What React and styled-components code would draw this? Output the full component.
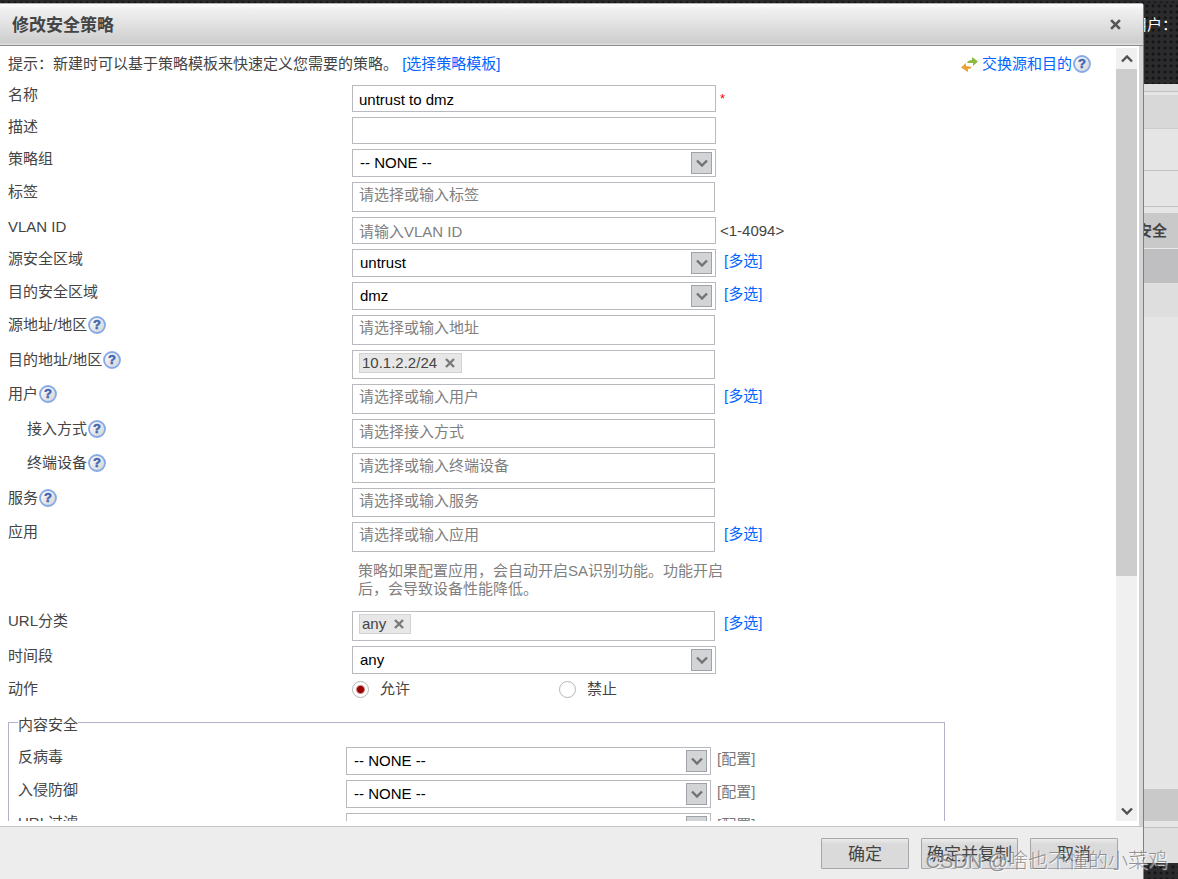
/* 3rd party modules */
import React from 'react';
import styled, { createGlobalStyle } from 'styled-components';

const GlobalStyle = createGlobalStyle`
  * {
    box-sizing: border-box;
  }

  body {
    margin: 0;
    color: #444;
    font-family: 'Liberation Sans', 'Noto Sans CJK SC', sans-serif;
    font-size: 15px;
    line-height: 20px;
  }

  button,
  input,
  select {
    margin: 0;
    font: inherit;
  }
`;

const Page = styled('div')`
  position: relative;
  display: flex;
  height: 100vh;
  padding-top: 3px;
  overflow: hidden;
  background: #2b2b2d radial-gradient(circle, #151516 1px, transparent 2px) 0 0 / 6px 6px;
`;

const Dialog = styled('section')`
  display: flex;
  flex: 1;
  flex-direction: column;
  min-width: 0;
  border-top: 1px solid #b4b4b4;
  border-right: 1px solid #808080;
  border-top-right-radius: 3px;
  background: #ededed;
`;

const Header = styled('header')`
  display: flex;
  align-items: center;
  justify-content: space-between;
  height: 42px;
  flex-shrink: 0;
  padding: 2px 22px 0 12px;
  border-bottom: 1px solid #8c8c8c;
  background: linear-gradient(#fff, #f0f0f0 15%, #cecece 94%, #e2e2e2);
`;

const Title = styled('h1')`
  margin: 0;
  font-size: 17px;
  line-height: 24px;
`;

const CloseButton = styled('button')`
  display: flex;
  align-items: center;
  justify-content: center;
  width: 11px;
  height: 22px;
  padding: 0 0 2px;
  border: 0;
  background: none;
  color: #555;
`;

const Body = styled('div')`
  display: flex;
  flex: 1;
  min-height: 0;
  padding: 2px 2px 5px 0;
  border-right: 4px solid #d4d4d4;
  background: #fff;
`;

const Pane = styled('div')`
  flex: 1;
  min-width: 0;
  padding: 6px 25px 0 8px;
  overflow: auto;
  scrollbar-width: none;
`;

const Scrollbar = styled('div')`
  display: flex;
  flex-direction: column;
  flex-shrink: 0;
  width: 21px;
  background: #f0f0f0;
`;

const ScrollButton = styled('button')`
  display: flex;
  align-items: center;
  justify-content: center;
  height: 21px;
  padding: 0;
  border: 0;
  background: #f0f0f0;
  color: #505050;
`;

const ScrollTrack = styled('div')`
  flex: 1;
`;

const ScrollThumb = styled('div')`
  height: 69.4%;
  background: #cdcdcd;
`;

const Hint = styled('div')`
  display: flex;
  justify-content: space-between;
  margin-bottom: 11px;
`;

const HintText = styled('p')`
  margin: 0;
`;

const Link = styled('a')`
  color: ${props => (props.$muted ? '#777' : '#06f')};
  text-decoration: none;
`;

const Help = styled('svg')`
  flex-shrink: 0;
  margin-left: 1px;
`;

const Swap = styled('div')`
  display: flex;
  align-items: center;

  ${Link} {
    margin-left: 4px;
  }
`;

const Row = styled('div')`
  display: flex;
  align-items: flex-start;
  margin-bottom: 5px;
`;

const Label = styled('label')`
  display: flex;
  flex-shrink: 0;
  align-items: center;
  width: ${props => (props.$inner ? 328 : 344)}px;
  height: 20px;
  padding-left: ${props => (props.$indent ? 19 : 0)}px;
`;

const TextInput = styled('input')`
  width: 364px;
  height: 27px;
  padding: 1px 6px 0;
  border: 1px solid #b9b9c0;
  background: #fff;
  color: #000;

  &::placeholder {
    color: #808080;
    opacity: 1;
  }
`;

const SelectBox = styled('div')`
  position: relative;
  width: ${props => (props.$inner ? 365 : 364)}px;
  height: 28px;
`;

const Select = styled('select')`
  width: 100%;
  height: 28px;
  padding: 0 28px 0 7px;
  border: 1px solid #b9b9c0;
  border-radius: 0;
  appearance: none;
  background: #fff;
  color: #000;
`;

const Arrow = styled('span')`
  position: absolute;
  top: 3px;
  right: 4px;
  display: flex;
  align-items: center;
  justify-content: center;
  width: 21px;
  height: 22px;
  border: 1px solid #9fa2a9;
  background: #d3d4d6;
  color: #717275;
  pointer-events: none;
`;

const TagBox = styled('div')`
  display: flex;
  align-items: flex-start;
  width: 363px;
  height: ${props => (props.$short ? 29 : 30)}px;
  padding: 0 6px;
  border: 1px solid #b9b9c0;
  background: #fff;
`;

const TagInput = styled('input')`
  flex: 1;
  min-width: 0;
  height: 22px;
  padding: 0;
  border: 0;
  outline: 0;
  background: none;

  &::placeholder {
    color: #808080;
    opacity: 1;
  }
`;

const Tag = styled('span')`
  display: flex;
  align-items: center;
  height: 20px;
  margin-top: 2px;
  padding: 0 6px 0 2px;
  border: 1px solid #d2d2d2;
  background: #e7e7e7;
`;

const TagRemove = styled('button')`
  display: flex;
  margin-left: 8px;
  padding: 0;
  border: 0;
  background: none;
  color: #7a7a7a;
`;

const Suffix = styled('span')`
  padding: ${props => (props.$link ? '2px 0 0' : '4px 0 0')};
  margin-left: ${props => props.$gap || 4}px;
`;

const Required = styled('span')`
  padding: 4px 0 0 4px;
  color: #f00;
  font-size: 13px;
`;

const Note = styled('p')`
  width: 378px;
  margin: 0 0 5px 344px;
  padding: 5px 6px 8px;
  color: #808080;
  line-height: 18px;
`;

const RadioGroup = styled('div')`
  display: flex;
`;

const RadioLabel = styled('label')`
  display: flex;
  align-items: center;
  gap: 11px;
  width: 207px;
  height: 20px;
`;

const Radio = styled('input')`
  width: 17px;
  height: 17px;
  border: 1px solid #b4b4b4;
  border-radius: 50%;
  appearance: none;
  background: #fff;

  &:checked {
    background: radial-gradient(circle, #900 3px, #fff 5px);
  }
`;

const Fieldset = styled('fieldset')`
  max-width: 937px;
  margin: 11px 0 0;
  padding: 13px 9px 0;
  border: 1px solid #b2b3c8;
`;

const Legend = styled('legend')`
  padding: 6px 0 0;
  line-height: 18px;
`;

const Footer = styled('footer')`
  display: flex;
  flex-shrink: 0;
  justify-content: flex-end;
  gap: 12px;
  height: 53px;
  padding: 11px 25px 0 0;
  border-top: 1px solid #c6c6c6;
`;

const FooterButton = styled('button')`
  min-width: 88px;
  height: 31px;
  padding: 2px 5px 0;
  border: 1px solid #a6a7ad;
  border-radius: 1px;
  background: linear-gradient(#ececec, #dadada 5px);
  color: #444;
  font-size: 17px;
  line-height: 24px;
`;

const Backdrop = styled('aside')`
  display: flex;
  flex-direction: column;
  width: 34px;
  margin-bottom: 16px;
  overflow: hidden;
  background: #e5e5e5;
`;

const Account = styled('div')`
  display: flex;
  justify-content: flex-end;
  height: 81px;
  flex-shrink: 0;
  padding: 12px 1px 0 0;
  background: #2b2b2d radial-gradient(circle, #151516 1px, transparent 2px) 0 0 / 6px 6px;
  color: #fff;
  white-space: nowrap;
`;

const Band = styled('div')`
  display: flex;
  flex-shrink: 0;
  align-items: center;
  justify-content: flex-end;
  height: ${props => props.$height}px;
  padding-right: 11px;
  border-bottom: 1px solid ${props => props.$line || 'transparent'};
  background: ${props => props.$color || '#e5e5e5'};
  font-weight: bold;
  white-space: nowrap;
`;

const Spacer = styled('div')`
  flex: 1;
`;

const Watermark = styled('div')`
  position: absolute;
  right: 10px;
  bottom: 5px;
  color: rgba(120, 120, 120, 0.8);
  font-size: 20px;
  font-weight: 300;
  line-height: 26px;
  text-shadow: 1px 1px 1px rgba(255, 255, 255, 0.9);
  white-space: nowrap;
  pointer-events: none;
`;

const HelpIcon = () => (
  <Help width="18" height="18" viewBox="0 0 18 18" aria-hidden="true">
    <defs>
      <linearGradient id="help" x1="0" y1="0" x2="1" y2="1">
        <stop offset="0" stopColor="#fff" />
        <stop offset="1" stopColor="#cfd1d6" />
      </linearGradient>
    </defs>
    <circle cx="9" cy="9" r="8" fill="url(#help)" stroke="#86a9e6" strokeWidth="1.8" />
    <text x="9" y="13.4" textAnchor="middle" fontFamily="Liberation Sans, sans-serif" fontSize="13" fontWeight="bold" fill="#3f66b0" stroke="#3f66b0" strokeWidth="0.5">?</text>
  </Help>
);

const SwapIcon = () => (
  <svg width="17" height="18" viewBox="0 0 17 18" aria-hidden="true">
    <path d="M6 8q1-3 5-3V2l6 4.500-5 4.500V8z" fill="#8fb93c" />
    <path d="M11 12q-1 2-4 2v3L0 12.500 5 8v3z" fill="#eda034" />
  </svg>
);

const Cross = ({ size }) => (
  <svg width={size} height={size} viewBox="0 0 10 10" stroke="currentColor" strokeWidth="2.4" aria-hidden="true">
    <path d="M1 1l8 8M9 1L1 9" />
  </svg>
);

const Chevron = ({ up }) => (
  <svg width="12" height="8" viewBox="0 0 12 8" fill="none" stroke="currentColor" strokeWidth="2.4" aria-hidden="true">
    <path d={up ? 'M1 6.500l5-5 5 5' : 'M1 1.500l5 5 5-5'} />
  </svg>
);

const SelectField = ({ id, value, inner }) => (
  <SelectBox $inner={inner}>
    <Select id={id} defaultValue={value}>
      <option>{value}</option>
    </Select>
    <Arrow><Chevron /></Arrow>
  </SelectBox>
);

const TagField = ({ id, tag, placeholder, short }) => (
  <TagBox $short={short}>
    {tag && (
      <Tag>
        {tag}
        <TagRemove type="button" aria-label="×"><Cross size={10} /></TagRemove>
      </Tag>
    )}
    <TagInput id={id} placeholder={placeholder} />
  </TagBox>
);

const MultiLink = ({ gap = 8 }) => (
  <Suffix $link $gap={gap}><Link href="#">[多选]</Link></Suffix>
);

const tagRows = [
  { id: 'src-addr', label: '源地址/地区', help: true, placeholder: '请选择或输入地址' },
  { id: 'dst-addr', label: '目的地址/地区', help: true, tag: '10.1.2.2/24', short: true },
  { id: 'user', label: '用户', help: true, placeholder: '请选择或输入用户', multi: true },
  { id: 'access', label: '接入方式', help: true, indent: true, placeholder: '请选择接入方式', short: true },
  { id: 'device', label: '终端设备', help: true, indent: true, placeholder: '请选择或输入终端设备' },
  { id: 'service', label: '服务', help: true, placeholder: '请选择或输入服务', short: true },
  { id: 'app', label: '应用', placeholder: '请选择或输入应用', multi: true },
];

const profiles = [
  { id: 'av', label: '反病毒' },
  { id: 'ips', label: '入侵防御' },
  { id: 'url-filter', label: 'URL过滤' },
];

const PolicyForm = () => (
  <Pane>
    <Hint>
      <HintText>
        提示：新建时可以基于策略模板来快速定义您需要的策略。 <Link href="#">[选择策略模板]</Link>
      </HintText>
      <Swap>
        <SwapIcon />
        <Link href="#">交换源和目的</Link>
        <HelpIcon />
      </Swap>
    </Hint>
    <Row>
      <Label htmlFor="name">名称</Label>
      <TextInput id="name" defaultValue="untrust to dmz" />
      <Required>*</Required>
    </Row>
    <Row>
      <Label htmlFor="desc">描述</Label>
      <TextInput id="desc" />
    </Row>
    <Row>
      <Label htmlFor="group">策略组</Label>
      <SelectField id="group" value="-- NONE --" />
    </Row>
    <Row>
      <Label htmlFor="tag">标签</Label>
      <TagField id="tag" placeholder="请选择或输入标签" />
    </Row>
    <Row>
      <Label htmlFor="vlan">VLAN ID</Label>
      <TextInput id="vlan" placeholder="请输入VLAN ID" />
      <Suffix>&lt;1-4094&gt;</Suffix>
    </Row>
    <Row>
      <Label htmlFor="src-zone">源安全区域</Label>
      <SelectField id="src-zone" value="untrust" />
      <MultiLink />
    </Row>
    <Row>
      <Label htmlFor="dst-zone">目的安全区域</Label>
      <SelectField id="dst-zone" value="dmz" />
      <MultiLink />
    </Row>
    {tagRows.map(row => (
      <Row key={row.id}>
        <Label htmlFor={row.id} $indent={row.indent}>
          {row.label}
          {row.help && <HelpIcon />}
        </Label>
        <TagField id={row.id} tag={row.tag} placeholder={row.placeholder} short={row.short} />
        {row.multi && <MultiLink gap={9} />}
      </Row>
    ))}
    <Note>策略如果配置应用，会自动开启SA识别功能。功能开启后，会导致设备性能降低。</Note>
    <Row>
      <Label htmlFor="url">URL分类</Label>
      <TagField id="url" tag="any" />
      <MultiLink gap={9} />
    </Row>
    <Row>
      <Label htmlFor="time">时间段</Label>
      <SelectField id="time" value="any" />
    </Row>
    <Row>
      <Label as="span">动作</Label>
      <RadioGroup>
        <RadioLabel><Radio type="radio" name="action" defaultChecked />允许</RadioLabel>
        <RadioLabel><Radio type="radio" name="action" />禁止</RadioLabel>
      </RadioGroup>
    </Row>
    <Fieldset>
      <Legend>内容安全</Legend>
      {profiles.map(profile => (
        <Row key={profile.id}>
          <Label htmlFor={profile.id} $inner>{profile.label}</Label>
          <SelectField id={profile.id} value="-- NONE --" inner />
          <Suffix $link $gap={6}><Link href="#" $muted>[配置]</Link></Suffix>
        </Row>
      ))}
    </Fieldset>
  </Pane>
);

const App = () => (
  <>
    <GlobalStyle />
    <Page>
      <Dialog>
        <Header>
          <Title>修改安全策略</Title>
          <CloseButton type="button" aria-label="关闭"><Cross size={11} /></CloseButton>
        </Header>
        <Body>
          <PolicyForm />
          <Scrollbar>
            <ScrollButton type="button" aria-label="向上"><Chevron up /></ScrollButton>
            <ScrollTrack><ScrollThumb /></ScrollTrack>
            <ScrollButton type="button" aria-label="向下"><Chevron /></ScrollButton>
          </Scrollbar>
        </Body>
        <Footer>
          <FooterButton type="button">确定</FooterButton>
          <FooterButton type="button">确定并复制</FooterButton>
          <FooterButton type="button">取消</FooterButton>
        </Footer>
      </Dialog>
      <Backdrop>
        <Account>用户：</Account>
        <Band $height={8} $color="#dedede" $line="#c2c2c2" />
        <Band $height={3} />
        <Band $height={34} $color="#d8d8d8" $line="#cdcdcd" />
        <Band $height={42} $line="#c2c2c2" />
        <Band $height={36} $line="#c2c2c2" />
        <Band $height={6} />
        <Band $height={36} $color="#c9c9c9" $line="#e8e8e8">安全</Band>
        <Band $height={35} $color="#bfbfc2" $line="#e0e0e0" />
        <Band $height={33} $color="#dedede" />
        <Spacer />
        <Band $height={32} $color="#c9c9c9" />
        <Band $height={7} $line="#c2c2c2" />
        <Band $height={35} $color="#dfdfdf" />
      </Backdrop>
      <Watermark>CSDN @啥也不懂的小菜鸡</Watermark>
    </Page>
  </>
);

export default App;
